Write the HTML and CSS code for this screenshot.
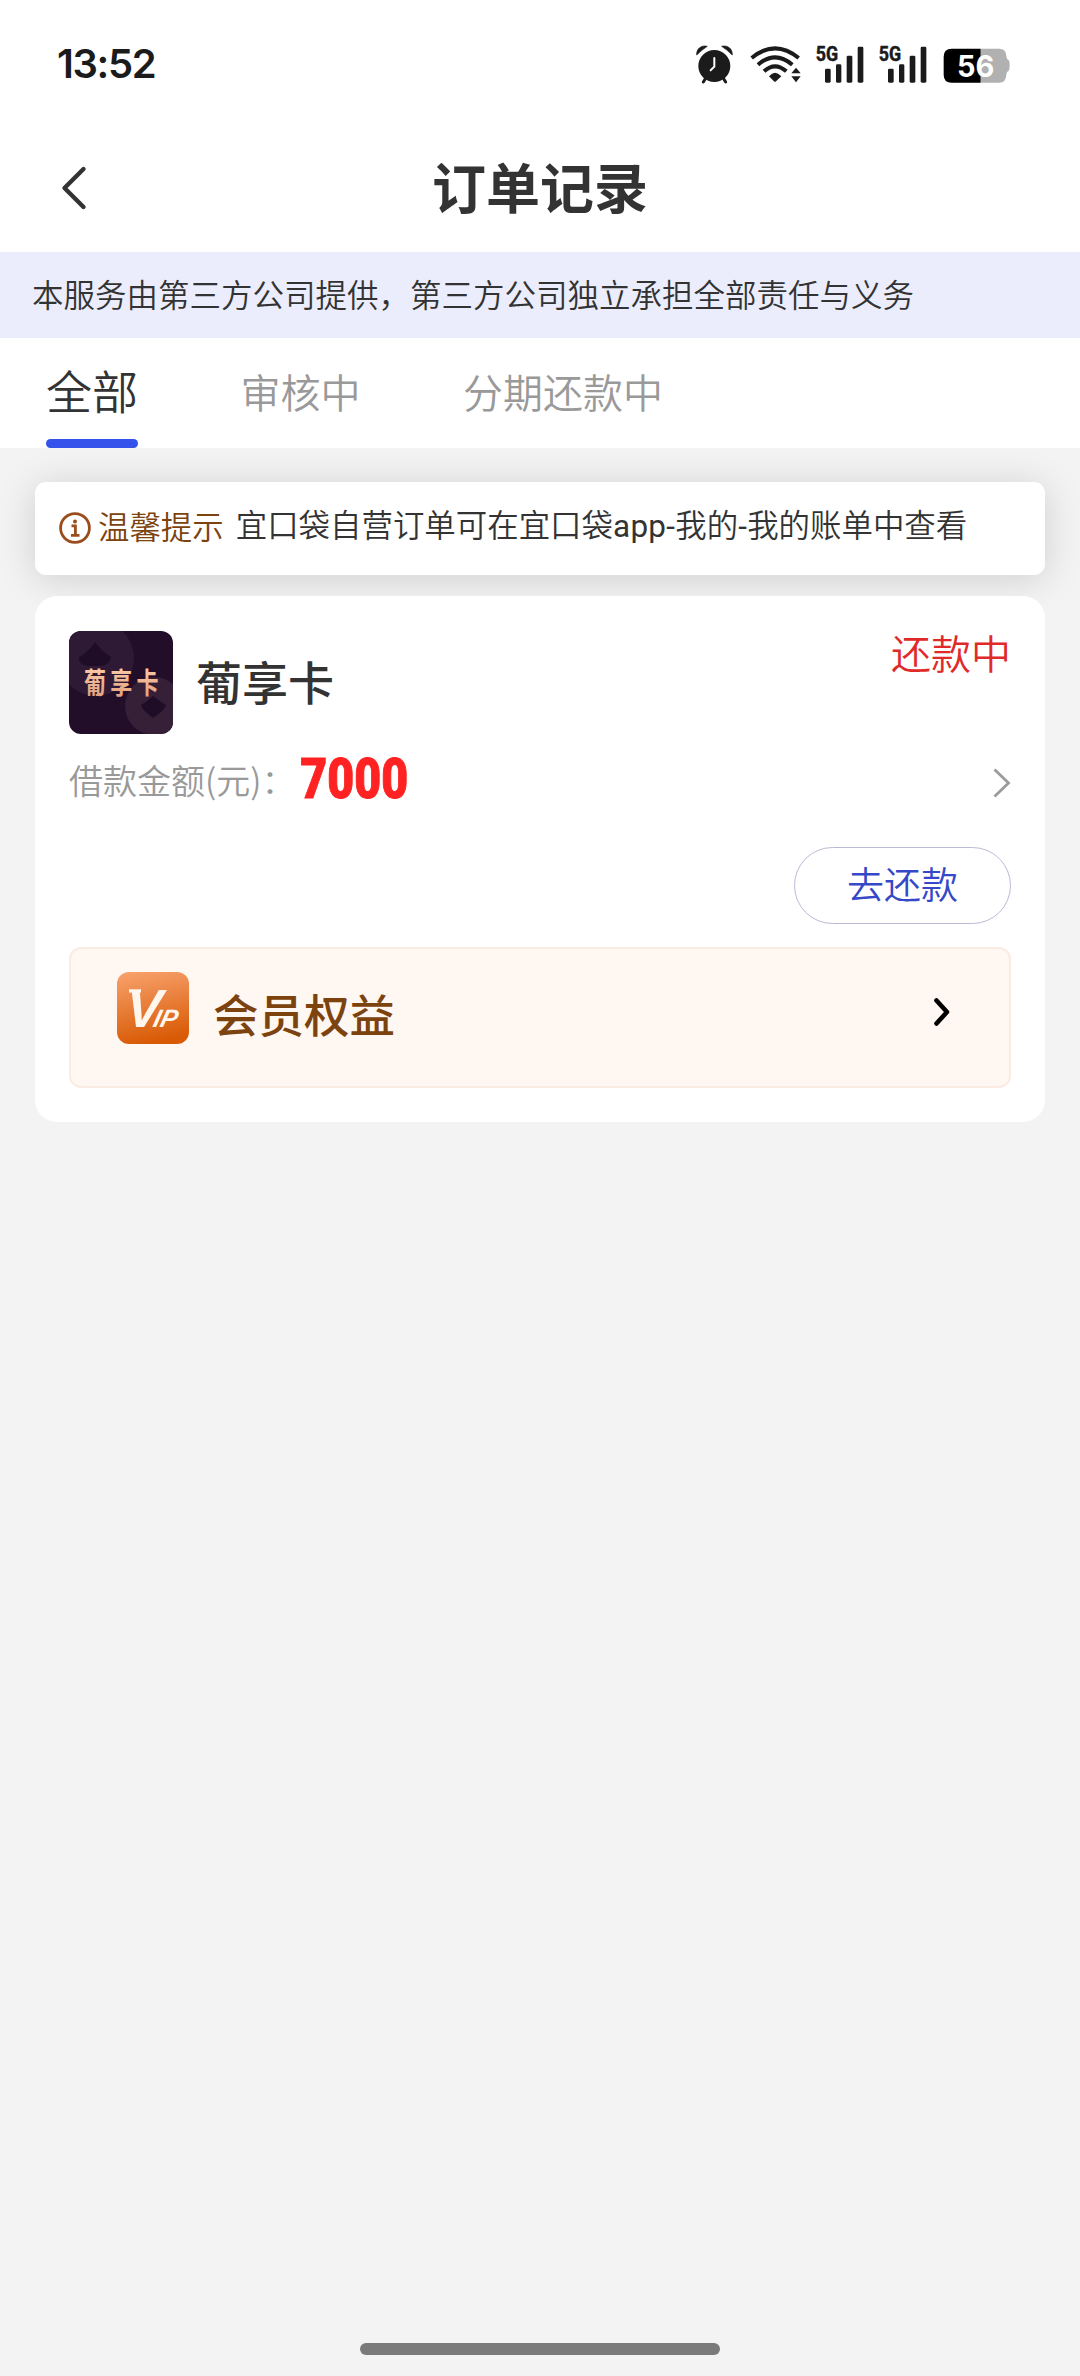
FILE: index.html
```html
<!DOCTYPE html>
<html lang="zh-CN">
<head>
<meta charset="utf-8">
<title>订单记录</title>
<link rel="stylesheet" href="styles.css">
</head>
<body>
<div class="screen">
  <div class="status-bar">
    <span class="clock">13:52</span>
    <div class="status-icons">
      <svg class="alarm" viewBox="78 70 112 120">
        <circle cx="133" cy="136" r="48" fill="#1b1b1b"/>
        <path d="M80 103C79 84 94 72 112 77Q96 87 80 103ZM187 103C188 84 173 72 155 77Q171 87 187 103Z" fill="#1b1b1b" stroke="#1b1b1b" stroke-width="2" stroke-linejoin="round"/>
        <path d="M106 174L100 184M161 174L167 184" stroke="#1b1b1b" stroke-width="9" stroke-linecap="round"/>
        <path d="M133 112V138L122 149" fill="none" stroke="#fff" stroke-width="6" stroke-linecap="round" stroke-linejoin="round"/>
      </svg>
      <svg class="wifi" viewBox="240 70 156 120">
        <g fill="none" stroke="#1b1b1b" stroke-width="12">
          <path d="M245 112Q315 54 386 112"/>
          <path d="M264 132Q315 88 367 132"/>
          <path d="M282 152Q315 122 349 152"/>
        </g>
        <path d="M297 167Q315 146 334 167L318 182Q315 185 312 182Z" fill="#1b1b1b"/>
        <path d="M364 158L378 141L392 158ZM364 167H392L378 185Z" fill="#1b1b1b"/>
      </svg>
      <svg class="signal" viewBox="434 70 146 120">
        <text x="436" y="122" class="net" textLength="67" lengthAdjust="spacingAndGlyphs">5G</text>
        <g fill="#1b1b1b"><rect x="464" y="144" width="17" height="42" rx="4"/><rect x="497" y="131" width="16" height="55" rx="4"/><rect x="529" y="105" width="17" height="81" rx="4"/><rect x="562" y="78" width="17" height="108" rx="4"/></g>
      </svg>
      <svg class="signal" viewBox="434 70 146 120">
        <text x="436" y="122" class="net" textLength="67" lengthAdjust="spacingAndGlyphs">5G</text>
        <g fill="#1b1b1b"><rect x="464" y="144" width="17" height="42" rx="4"/><rect x="497" y="131" width="16" height="55" rx="4"/><rect x="529" y="105" width="17" height="81" rx="4"/><rect x="562" y="78" width="17" height="108" rx="4"/></g>
      </svg>
      <svg class="battery" viewBox="817 70 202 120">
        <path d="M930 84H986Q1006 84 1007 106Q1008 116 1014 119Q1017 121 1017 134Q1017 148 1014 150Q1008 152 1007 162Q1006 186 986 186H930Z" fill="#b1b1b1"/>
        <path d="M930 84H843Q819 84 819 108V162Q819 186 843 186H930Z" fill="#000"/>
        <text x="859" y="168" class="level" textLength="112" lengthAdjust="spacingAndGlyphs">56</text>
      </svg>
    </div>
  </div>

  <header class="nav">
    <svg class="back" viewBox="0 0 28 46"><path d="M23.5 4L4.5 23L23.5 42" fill="none" stroke="#333" stroke-width="4.4" stroke-linecap="round" stroke-linejoin="round"/></svg>
    <h1 class="title">订单记录</h1>
  </header>

  <div class="notice">本服务由第三方公司提供，第三方公司独立承担全部责任与义务</div>

  <nav class="tabs">
    <span class="tab active">全部</span>
    <span class="tab">审核中</span>
    <span class="tab">分期还款中</span>
  </nav>

  <main class="content">
    <div class="tip">
      <svg class="info" viewBox="0 0 32 32"><circle cx="16" cy="16" r="14.4" fill="none" stroke="#9a4c1c" stroke-width="2.8"/><circle cx="16" cy="9.4" r="2" fill="#9a4c1c"/><path d="M12.5 13.8H16.4V23.2M12 23.4H20.5" fill="none" stroke="#9a4c1c" stroke-width="2.8"/></svg>
      <span class="tip-label">温馨提示</span>
      <span class="tip-text">宜口袋自营订单可在宜口袋<span class="latin">app-</span>我的<span class="latin">-</span>我的账单中查看</span>
    </div>

    <section class="order">
      <div class="order-head">
        <svg class="logo" viewBox="0 0 104 103">
          <defs><clipPath id="tile"><rect width="104" height="103" rx="12"/></clipPath><linearGradient id="gold" x1="0" y1="0" x2="0" y2="1"><stop offset="0" stop-color="#ffd5b4"/><stop offset="1" stop-color="#e09a76"/></linearGradient></defs>
          <g clip-path="url(#tile)">
            <rect width="104" height="103" fill="#220e29"/>
            <circle cx="27" cy="27" r="38" fill="#2e1a34"/>
            <path d="M26 11Q32 20 42 26Q41 34 32 35H19Q9 34 10 26Q21 20 26 11Z" fill="#1f0c27"/>
            <circle cx="85" cy="75" r="29" fill="#352038"/>
            <path d="M84 65Q90 70 97 74Q96 79 84 87Q73 79 72 74Q79 70 84 65Z" fill="#1f0c27"/>
          </g>
          <g class="logo-text" fill="url(#gold)" transform="translate(15 62.5) scale(.76 1)"><text x="0" y="0" textLength="98" lengthAdjust="spacing">葡享卡</text></g>
        </svg>
        <span class="order-name">葡享卡</span>
        <span class="order-state">还款中</span>
      </div>
      <div class="amount-row">
        <span class="amount-label">借款金额(元)：</span>
        <span class="amount">7000</span>
        <svg class="more" viewBox="0 0 18 30"><path d="M1.5 1.5L15.5 15L1.5 28.5" fill="none" stroke="#9b9b9b" stroke-width="2.8"/></svg>
      </div>
      <div class="actions"><button class="repay">去还款</button></div>
      <div class="vip">
        <svg class="vip-icon" viewBox="0 0 72 72" role="img" aria-label="VIP">
          <defs><linearGradient id="orange" x1="0.2" y1="0" x2="0.4" y2="1"><stop offset="0" stop-color="#f7a06a"/><stop offset="1" stop-color="#d85a05"/></linearGradient></defs>
          <rect width="72" height="72" rx="12" fill="url(#orange)"/>
          <g transform="translate(0 55) skewX(-14)"><text class="vip-v"><tspan x="5">V</tspan><tspan class="vip-ip" x="35">IP</tspan></text></g>
          <path d="M12 17.3H24V20.6H12Z" fill="#fff7ee"/>
        </svg>
        <span class="vip-label">会员权益</span>
        <svg class="vip-arrow" viewBox="0 0 18 30"><path d="M3.5 3.5L14 15L3.5 26.5" fill="none" stroke="#000" stroke-width="4.6" stroke-linecap="round" stroke-linejoin="round"/></svg>
      </div>
    </section>
  </main>
  <div class="home-bar"></div>
</div>
</body>
</html>
```
FILE: styles.css
```css
* { box-sizing: border-box; }

body {
  margin: 0;
  background: #f3f3f3;
  color: #333;
  font-family: "Noto Sans CJK SC", sans-serif;
}

svg { display: block; flex: none; overflow: visible; }

.screen {
  display: flex;
  flex-direction: column;
  width: 1080px;
  height: 2376px;
}

.status-bar {
  display: flex;
  align-items: center;
  justify-content: space-between;
  height: 127px;
  padding: 0 70px 0 57px;
  background: #fff;
}

.clock {
  font: 600 40px/1 Inter, sans-serif;
  letter-spacing: -1.4px;
  color: #1b1b1b;
}

.status-icons { display: flex; }
.status-icons svg { height: 40px; }
.alarm { width: 37.3px; }
.wifi { width: 52px; margin-left: 16.7px; }
.signal { width: 48.7px; margin-left: 12.7px; }
.signal + .signal { margin-left: 14.7px; }
.battery { width: 67.3px; margin-left: 15.7px; }
.net { font: 700 62px Roboto, sans-serif; fill: #1b1b1b; stroke: #1b1b1b; stroke-width: 1.5px; }
.level { font: 700 88px Inter, sans-serif; fill: #fff; }

.nav {
  display: grid;
  grid-template-columns: 120px 1fr 120px;
  align-items: center;
  height: 125px;
  background: #fff;
}
.back { width: 28px; height: 46px; margin: -3px 0 0 60px; }
.title {
  margin: 0;
  padding-bottom: 7px;
  text-align: center;
  font-size: 54px;
  font-weight: 700;
  line-height: 80px;
}

.notice {
  height: 86px;
  padding-left: 32px;
  background: #ebedfc;
  font-size: 31.5px;
  font-weight: 350;
  line-height: 83px;
  white-space: nowrap;
}

.tabs {
  display: flex;
  gap: 102.5px;
  height: 110px;
  padding-left: 46px;
  background: #fff;
}
.tab {
  font-size: 40px;
  font-weight: 350;
  line-height: 106px;
  color: #999;
}
.tab.active {
  display: flex;
  flex-direction: column;
  font-size: 46px;
  line-height: 102px;
  color: #333;
}
.tab.active::after {
  content: "";
  height: 9px;
  margin-top: -1px;
  border-radius: 5px;
  background: #3552ea;
}

.content {
  flex: 1;
  display: flex;
  flex-direction: column;
  gap: 21px;
  padding: 34px 35px 0;
}

.tip {
  display: flex;
  align-items: center;
  height: 93px;
  padding-left: 24px;
  border-radius: 11px;
  background: #fff;
  box-shadow: 0 4px 38px rgba(0, 0, 0, 0.15);
  font-size: 31.45px;
  font-weight: 350;
  line-height: 46px;
  white-space: nowrap;
}
.info { width: 32px; height: 32px; margin-bottom: 2px; }
.tip-label { margin: 0 0 6px 7px; color: #7c430e; }
.tip-text { margin: 0 0 6px 12px; }
.latin { font-family: Roboto, sans-serif; font-weight: 400; letter-spacing: 0.3px; }

.order {
  height: 526px;
  padding: 35px 34px;
  border-radius: 22px;
  background: #fff;
  z-index: 1;
  position: relative;
}
.order-head { display: flex; height: 104px; }
.logo { width: 104px; height: 103px; }
.logo-text { font-size: 29px; font-weight: 700; }
.order-name {
  margin-left: 23px;
  font-size: 46px;
  font-weight: 500;
  line-height: 98px;
}
.order-state {
  margin-left: auto;
  font-size: 40px;
  font-weight: 350;
  line-height: 42px;
  color: #e02a2a;
}

.amount-row {
  display: flex;
  align-items: center;
  height: 96px;
}
.amount-label { margin-bottom: 7px; font-size: 34px; font-weight: 350; color: #999; }
.amount {
  margin: -8px 0 0 -10px;
  padding-left: 17px;
  font: 900 55px/1 Roboto, sans-serif;
  color: #ff2222;
  -webkit-text-stroke: 1px #ff2222;
  transform: scaleX(0.845);
  transform-origin: left;
}
.more { width: 18px; height: 30px; margin-left: auto; }

.actions { display: flex; justify-content: flex-end; padding-top: 16px; }
.repay {
  width: 217px;
  height: 77px;
  padding: 0 0 5px;
  border: 1px solid #b9bbd6;
  border-radius: 39px;
  background: #fff;
  font: 350 37px/1 "Noto Sans CJK SC", sans-serif;
  color: #3548c8;
}

.vip {
  display: flex;
  height: 141px;
  margin-top: 23px;
  padding: 23px 58px 0 46px;
  border: 2px solid #faece3;
  border-radius: 12px;
  background: #fff7f1;
}
.vip-icon { width: 72px; height: 72px; }
.vip-v { font: 700 54px "Liberation Sans", sans-serif; fill: #fff7ee; }
.vip-ip { font-style: italic; font-size: 25px; }
.vip-label {
  margin-left: 24px;
  font-size: 45.5px;
  font-weight: 500;
  line-height: 83px;
  color: #7c430e;
}
.vip-arrow { width: 18px; height: 30px; margin: 25px 0 0 auto; }

.home-bar {
  width: 360px;
  height: 12px;
  margin: 0 auto 21px;
  border-radius: 6px;
  background: #7a7a7a;
}
```
